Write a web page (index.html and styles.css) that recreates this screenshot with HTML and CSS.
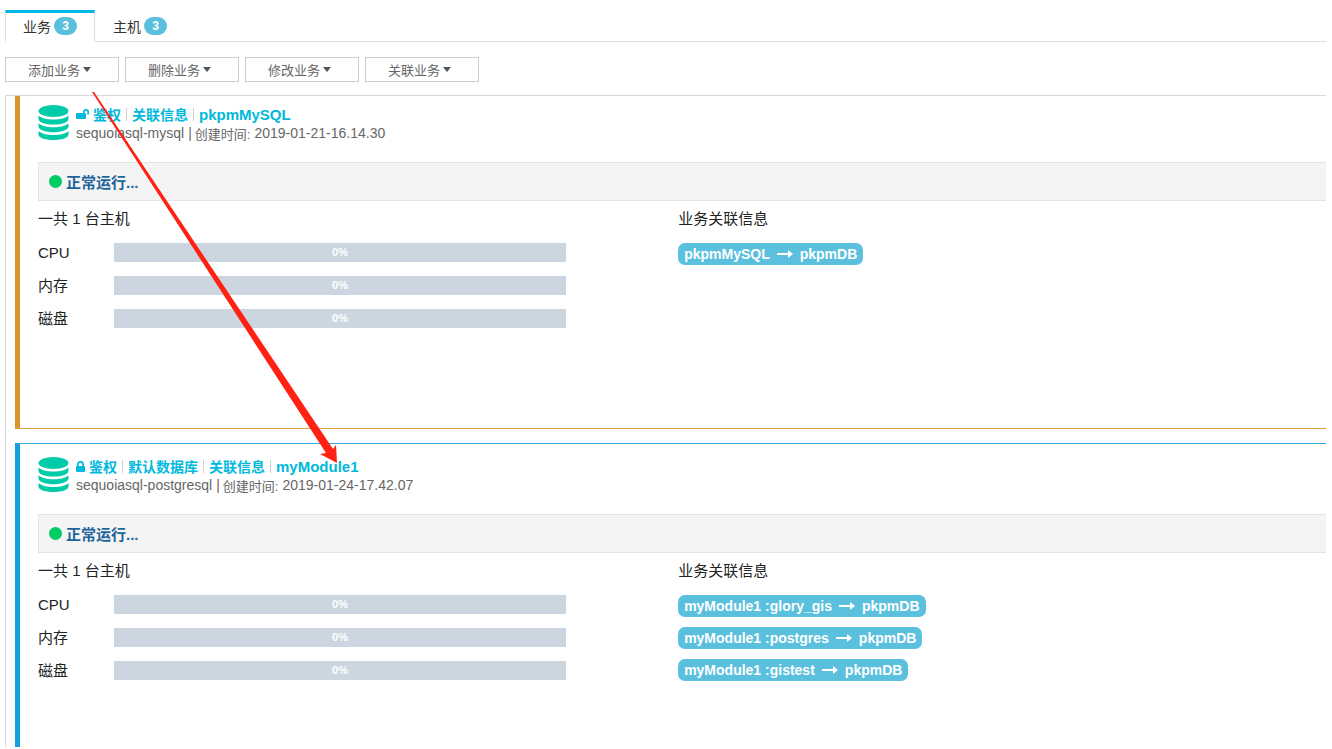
FILE: index.html
```html
<!DOCTYPE html>
<html lang="zh-CN">
<head>
<meta charset="utf-8">
<meta name="viewport" content="width=device-width, initial-scale=1">
<title>业务</title>
<link rel="stylesheet" href="styles.css">
</head>
<body>
<svg class="defs" aria-hidden="true">
  <symbol id="database" viewBox="0 0 30 35">
    <ellipse cx="15" cy="6" rx="15" ry="6"/>
    <path d="M0 10.500C3 13.400 8 14.500 15 14.500S27 13.400 30 10.500V14C30 17.400 23.300 19.600 15 19.600S0 17.400 0 14Z"/>
    <path d="M0 18.300C3 21.200 8 22.300 15 22.300S27 21.200 30 18.300V21.500C30 24.900 23.300 27.200 15 27.200S0 24.900 0 21.500Z"/>
    <path d="M0 26.100C3 29 8 30.100 15 30.100S27 29 30 26.100V29.500C30 32.800 23.300 35 15 35S0 32.800 0 29.500Z"/>
  </symbol>
  <symbol id="arrow" viewBox="0 0 16 10">
    <path d="M0 4H11V1L16 5L11 9V6H0Z"/>
  </symbol>
</svg>

<nav class="tabs">
  <button class="tab tab-active" type="button">业务 <span class="count">3</span></button>
  <button class="tab" type="button">主机 <span class="count">3</span></button>
</nav>

<div class="toolbar">
  <button class="action" type="button">添加业务<span class="caret"></span></button>
  <button class="action" type="button">删除业务<span class="caret"></span></button>
  <button class="action" type="button">修改业务<span class="caret"></span></button>
  <button class="action" type="button">关联业务<span class="caret"></span></button>
</div>

<main class="panel">
  <section class="card card-mysql">
    <header class="head">
      <svg class="database"><use href="#database"/></svg>
      <div>
        <div class="links">
          <svg class="lock-open" viewBox="0 0 13 10"><path d="M1 4H7V3A3 3 0 0 1 13 3V5.500H11.300V3A1.300 1.300 0 0 0 8.700 3V4H9Q10 4 10 5V9Q10 10 9 10H1Q0 10 0 9V5Q0 4 1 4Z"/></svg>
          <a href="#">鉴权</a><i class="bar"></i><a href="#">关联信息</a><i class="bar"></i><a class="name" href="#">pkpmMySQL</a>
        </div>
        <div class="meta"><span>sequoiasql-mysql</span><span class="created">|</span><span class="cjk">创建时间:</span><span>2019-01-21-16.14.30</span></div>
      </div>
    </header>
    <div class="status"><span class="dot"></span>正常运行...</div>
    <div class="columns">
      <div class="hosts">
        <div class="title">一共 1 台主机</div>
        <div class="usage"><span>CPU</span><div class="meter">0%</div></div>
        <div class="usage"><span>内存</span><div class="meter">0%</div></div>
        <div class="usage"><span>磁盘</span><div class="meter">0%</div></div>
      </div>
      <div>
        <div class="title">业务关联信息</div>
        <div class="relations">
          <span class="relation">pkpmMySQL<svg class="arrow"><use href="#arrow"/></svg>pkpmDB</span>
        </div>
      </div>
    </div>
  </section>

  <section class="card card-postgresql">
    <header class="head">
      <svg class="database"><use href="#database"/></svg>
      <div>
        <div class="links">
          <svg class="lock" viewBox="0 0 9 11"><path fill-rule="evenodd" d="M1 5V3.500A3.500 3.500 0 0 1 8 3.500V5Q9 5 9 6V10Q9 11 8 11H1Q0 11 0 10V6Q0 5 1 5ZM2.700 5H6.300V3.500A1.800 1.800 0 0 0 2.700 3.500Z"/></svg>
          <a href="#">鉴权</a><i class="bar"></i><a href="#">默认数据库</a><i class="bar"></i><a href="#">关联信息</a><i class="bar"></i><a class="name" href="#">myModule1</a>
        </div>
        <div class="meta"><span>sequoiasql-postgresql</span><span class="created">|</span><span class="cjk">创建时间:</span><span>2019-01-24-17.42.07</span></div>
      </div>
    </header>
    <div class="status"><span class="dot"></span>正常运行...</div>
    <div class="columns">
      <div class="hosts">
        <div class="title">一共 1 台主机</div>
        <div class="usage"><span>CPU</span><div class="meter">0%</div></div>
        <div class="usage"><span>内存</span><div class="meter">0%</div></div>
        <div class="usage"><span>磁盘</span><div class="meter">0%</div></div>
      </div>
      <div>
        <div class="title">业务关联信息</div>
        <div class="relations">
          <span class="relation">myModule1 :glory_gis<svg class="arrow"><use href="#arrow"/></svg>pkpmDB</span>
          <span class="relation">myModule1 :postgres<svg class="arrow"><use href="#arrow"/></svg>pkpmDB</span>
          <span class="relation">myModule1 :gistest<svg class="arrow"><use href="#arrow"/></svg>pkpmDB</span>
        </div>
      </div>
    </div>
  </section>
</main>

<svg class="pointer" viewBox="0 0 260 380" aria-hidden="true">
  <path d="M92 92L94 92L333 449L336 445L337 463L320 454L326 453Z"/>
</svg>
</body>
</html>
```
FILE: styles.css
```css
* { box-sizing: border-box; }

body {
  margin: 0;
  height: 100vh;
  padding: 10px 6px 2px 5px;
  display: flex;
  flex-direction: column;
  overflow: hidden;
  position: relative;
  background: #fff;
  color: #222;
  font-family: "Liberation Sans", "Noto Sans CJK SC", sans-serif;
  font-size: 15px;
}

button { font-family: inherit; }
a { color: inherit; text-decoration: none; }
.defs { display: none; }

.tabs {
  display: flex;
  height: 32px;
  flex: none;
  border-bottom: 1px solid #ddd;
}

.tab {
  display: flex;
  align-items: center;
  gap: 3px;
  height: 32px;
  padding: 0 17px 3px;
  border: 1px solid transparent;
  border-top: 3px solid transparent;
  background: none;
  color: #333;
  font-size: 14px;
}

.tab-active {
  border-color: #00b7e5 #ddd #fff;
  background: #fff;
}

.count {
  width: 23px;
  border-radius: 9px;
  background: #5bc0de;
  color: #fff;
  font-size: 12px;
  font-weight: bold;
  line-height: 18px;
  text-align: center;
}

.toolbar {
  display: flex;
  flex: none;
  gap: 6px;
  padding: 15px 0 13px;
}

.action {
  display: flex;
  align-items: center;
  justify-content: center;
  gap: 3px;
  width: 114px;
  height: 25px;
  padding: 0 5px 1px 0;
  border: 1px solid #ccc;
  background: #fff;
  color: #666;
  font-size: 13px;
}

.caret {
  border: 4px solid transparent;
  border-top: 5px solid #555;
  border-bottom: 0;
}

.panel {
  flex: 1;
  min-height: 0;
  overflow: hidden;
  padding-left: 9px;
  border-top: 1px solid #d8d8d8;
  border-left: 1px solid #d8d8d8;
}

.card {
  min-height: 338px;
  margin-bottom: 14px;
  padding: 13px 0 0 18px;
  border-left: 5px solid;
}

.card-mysql {
  min-height: 333px;
  padding-top: 9px;
  border-bottom: 1px solid #e0a040;
  border-left-color: #d9952b;
}

.card-postgresql {
  border-top: 1px solid #39a9dc;
  border-left-color: #15a0db;
}

.head {
  display: flex;
  gap: 7px;
  height: 57px;
}

.database {
  width: 31px;
  height: 35px;
  fill: #00cba9;
}

.links {
  display: flex;
  align-items: center;
  height: 18px;
  color: #00b9dc;
  font-size: 14px;
  font-weight: bold;
}

.name { font-size: 15px; }

.bar {
  width: 1px;
  height: 13px;
  margin: 0 5px;
  background: #d5d0d0;
}

.lock-open, .lock { fill: #00b9dc; margin-right: 4px; }
.lock-open { width: 13px; height: 10px; }
.lock { width: 9px; height: 11px; }

.meta {
  display: flex;
  align-items: center;
  height: 20px;
  color: #666;
  font-size: 14px;
}

.cjk { font-size: 13px; margin-right: 4px; }
.created { margin: 0 3px 0 4px; }

.status {
  display: flex;
  align-items: center;
  gap: 4px;
  height: 39px;
  padding: 0 0 1px 10px;
  border: 1px solid #e4e4e4;
  border-right: 0;
  background: #f4f4f4;
  color: #1f6498;
  font-weight: bold;
}

.dot {
  width: 13px;
  height: 13px;
  border-radius: 50%;
  background: #00cc66;
}

.columns {
  display: grid;
  grid-template-columns: 49.7% 1fr;
}

.hosts { padding-right: 112px; }

.title {
  height: 35px;
  line-height: 35px;
}

.usage {
  display: grid;
  grid-template-columns: 76px 1fr;
  align-items: center;
  height: 33px;
  line-height: 19px;
}

.meter {
  height: 19px;
  background: #ccd6e0;
  color: #fff;
  font-size: 11px;
  font-weight: bold;
  text-align: center;
}

.relations {
  display: flex;
  flex-direction: column;
  align-items: flex-start;
  gap: 10px;
  padding-top: 7px;
}

.relation {
  display: flex;
  align-items: center;
  height: 22px;
  padding: 0 6px;
  border-radius: 7px;
  background: #5bc0de;
  color: #fff;
  font-size: 14px;
  font-weight: bold;
}

.arrow {
  width: 16px;
  height: 10px;
  margin: 0 7px;
  fill: #fff;
}

.pointer {
  position: absolute;
  top: 0;
  left: 0;
  width: 260px;
  height: 380px;
  overflow: visible;
  fill: #ff2112;
  pointer-events: none;
}
```
